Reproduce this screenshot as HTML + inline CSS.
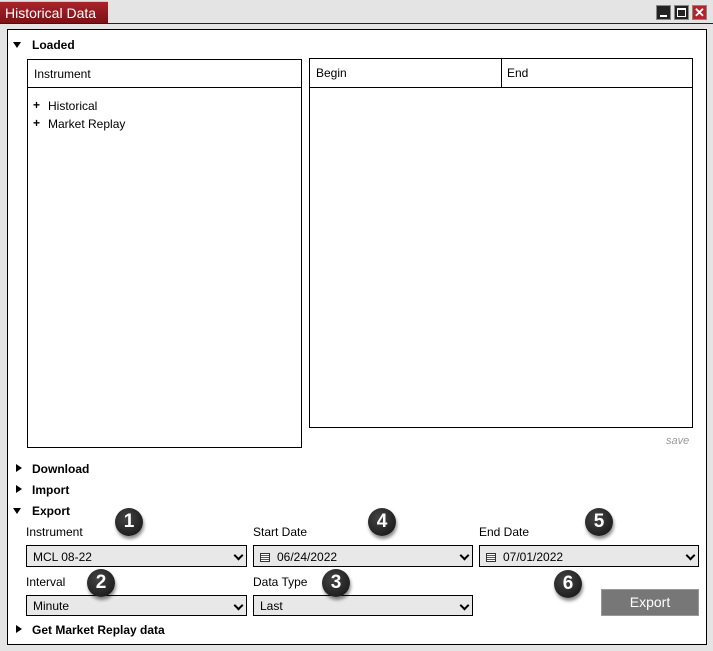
<!DOCTYPE html>
<html><head><style>
*{box-sizing:border-box;margin:0;padding:0}
body{width:713px;height:651px;background:#e4e4e4;font-family:"Liberation Sans",Arial,sans-serif;font-size:12px;color:#000;position:relative;overflow:hidden}
.a{position:absolute}
#tab{left:0;top:1px;width:108px;height:22px;background:linear-gradient(#a8242b,#7c1116);color:#fff;font-size:14px;padding:3px 0 0 5px;border-top:1px solid #ccc}
#hl{left:0;top:23px;width:713px;height:1px;background:#222}
.wb{top:5px;width:15px;height:15px;border:1px solid #888;background:#222}
#panel{left:7px;top:29px;width:700px;height:616px;background:#fff;border:1px solid #000}
.tri{width:0;height:0;border-left:4px solid transparent;border-right:4px solid transparent;border-top:6px solid #000}
.tr{width:0;height:0;border-top:4px solid transparent;border-bottom:4px solid transparent;border-left:6px solid #000}
.b{font-weight:bold;font-size:12px}
.box{border:1px solid #000;background:#fff}
.sel{height:22px;border:1px solid #000;background:#e8e8e8;padding:4px 0 0 6px;font-size:12px}
.sel:after{content:"";position:absolute;right:4px;top:6px;width:5px;height:5px;border-right:2px solid #000;border-bottom:2px solid #000;transform:rotate(45deg)}
.cal{display:inline-block;width:10px;height:9px;border:1px solid #333;margin-right:7px;vertical-align:-1px;background:repeating-linear-gradient(#fff 0 1px,#555 1px 2px)}
.badge{width:28px;height:28px;border-radius:50%;background:radial-gradient(circle at 40% 35%,#444,#111);color:#fff;font-weight:bold;font-size:19px;text-align:center;line-height:28px;box-shadow:1px 3px 3px rgba(0,0,0,.45)}
</style></head><body>
<div class="a" id="tab">Historical Data</div>
<div class="a" id="hl"></div>
<div class="a wb" style="left:656px"><div class="a" style="left:3px;top:9px;width:7px;height:2px;background:#fff"></div></div>
<div class="a wb" style="left:674px"><div class="a" style="left:2px;top:2px;width:9px;height:9px;border:1px solid #fff;border-top-width:2px"></div></div>
<div class="a wb" style="left:692px;background:#b3242a;color:#fff;font-weight:bold;font-size:13px;line-height:13px;text-align:center">✕</div>
<div class="a" id="panel"></div>
<div class="a tri" style="left:13px;top:42px"></div><div class="a b" style="left:32px;top:38px">Loaded</div>
<div class="a box" style="left:27px;top:59px;width:275px;height:389px"></div>
<div class="a" style="left:27px;top:87px;width:275px;height:1px;background:#000"></div>
<div class="a" style="left:34px;top:67px">Instrument</div>
<div class="a b" style="left:33px;top:98px">+</div><div class="a" style="left:48px;top:99px">Historical</div>
<div class="a b" style="left:33px;top:116px">+</div><div class="a" style="left:48px;top:117px">Market Replay</div>
<div class="a box" style="left:309px;top:58px;width:384px;height:370px"></div>
<div class="a" style="left:309px;top:87px;width:384px;height:1px;background:#000"></div>
<div class="a" style="left:501px;top:58px;width:1px;height:29px;background:#000"></div>
<div class="a" style="left:316px;top:66px">Begin</div><div class="a" style="left:507px;top:66px">End</div>
<div class="a" style="left:666px;top:435px;color:#999;font-style:italic;font-size:11px">save</div>
<div class="a tr" style="left:16px;top:464px"></div><div class="a b" style="left:32px;top:462px">Download</div>
<div class="a tr" style="left:16px;top:485px"></div><div class="a b" style="left:32px;top:483px">Import</div>
<div class="a tri" style="left:13px;top:508px"></div><div class="a b" style="left:32px;top:504px">Export</div>
<div class="a" style="left:26px;top:525px">Instrument</div>
<div class="a" style="left:253px;top:525px">Start Date</div>
<div class="a" style="left:479px;top:525px">End Date</div>
<div class="a sel" style="left:26px;top:545px;width:221px">MCL 08-22</div>
<div class="a sel" style="left:253px;top:545px;width:220px"><span class="cal"></span>06/24/2022</div>
<div class="a sel" style="left:479px;top:545px;width:220px"><span class="cal"></span>07/01/2022</div>
<div class="a" style="left:26px;top:575px">Interval</div>
<div class="a" style="left:253px;top:575px">Data Type</div>
<div class="a sel" style="left:26px;top:595px;width:221px;height:21px;padding-top:3px">Minute</div>
<div class="a sel" style="left:253px;top:595px;width:220px;height:21px;padding-top:3px">Last</div>
<div class="a" style="left:601px;top:589px;width:98px;height:27px;background:#777;border:1px solid #999;color:#fff;font-size:14px;text-align:center;line-height:25px">Export</div>
<div class="a tr" style="left:16px;top:625px"></div><div class="a b" style="left:32px;top:623px">Get Market Replay data</div>
<div class="a badge" style="left:115px;top:508px">1</div>
<div class="a badge" style="left:368px;top:508px">4</div>
<div class="a badge" style="left:585px;top:508px">5</div>
<div class="a badge" style="left:87px;top:569px">2</div>
<div class="a badge" style="left:322px;top:569px">3</div>
<div class="a badge" style="left:554px;top:570px">6</div>
</body></html>
